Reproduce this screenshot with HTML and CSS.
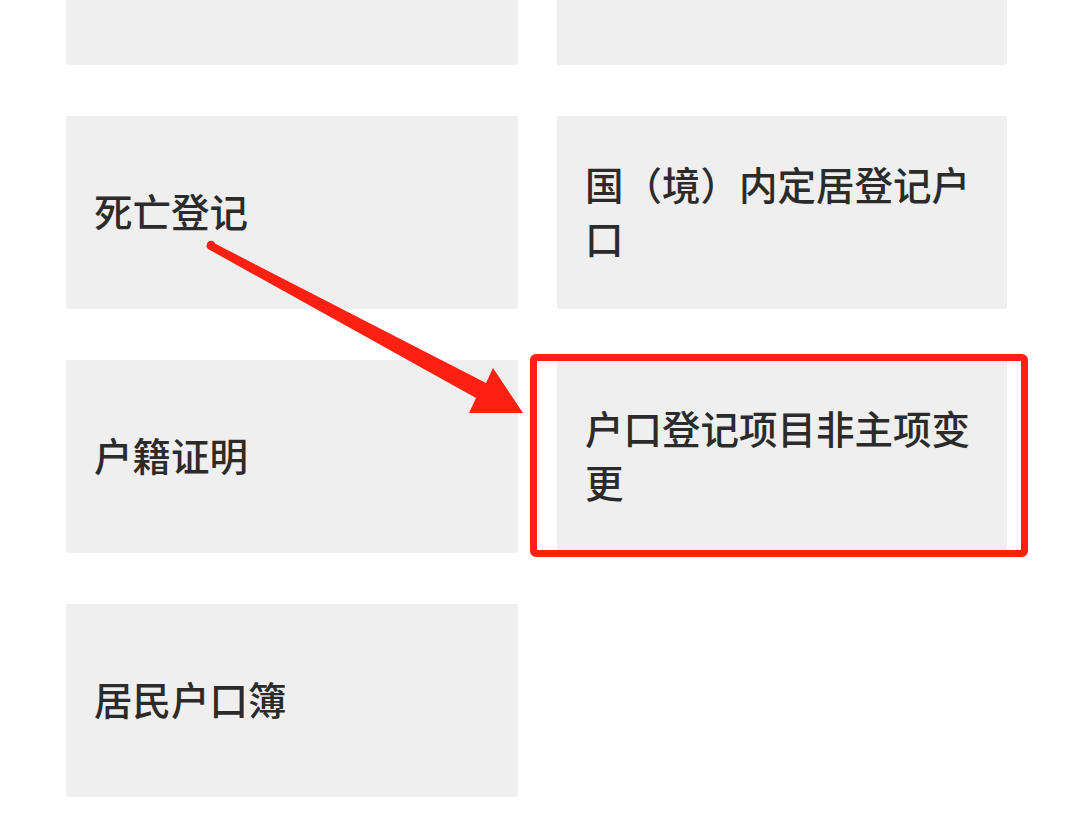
FILE: index.html
```html
<!DOCTYPE html>
<html lang="zh">
<head>
    <meta charset="UTF-8">
    <meta name="viewport" content="width=device-width, initial-scale=1.0">
    <title>户籍业务</title>
    <link rel="stylesheet" href="styles.css">
</head>
<body>
    <div class="page">
        <div class="grid">
            <div class="card"></div>
            <div class="card"></div>
            <div class="card">死亡登记</div>
            <div class="card">国（境）内定居登记户口</div>
            <div class="card">户籍证明</div>
            <div class="card card-marked">
                户口登记项目非主项变更
                <div class="highlight"></div>
            </div>
            <div class="card">居民户口簿</div>
        </div>

        <!-- 标注箭头 -->
        <svg class="arrow" width="1080" height="816" viewBox="0 0 1080 816">
            <path d="M210 241 L486 383 L493 368 L523 413 L469 413 L476 398 L208 249 Q204 245 210 241 Z" fill="#ff2014"/>
            <circle cx="211" cy="245" r="4.2" fill="#ff2014"/>
        </svg>
    </div>
</body>
</html>
```

FILE: styles.css
```css
body {
    margin: 0;
    background-color: #fff;
    font-family: "Noto Sans CJK SC", "Noto Sans", sans-serif;
    color: #2b2b2b;
    overflow: hidden;
}
.page {
    position: relative;
    width: 1080px;
    height: 816px;
    overflow: hidden;
}
.grid {
    display: grid;
    grid-template-columns: 452px 450px;
    grid-auto-rows: 193px;
    column-gap: 39px;
    row-gap: 51px;
    padding-left: 66px;
    margin-top: -128px;
}
.card {
    position: relative;
    display: flex;
    align-items: center;
    background-color: #efefef;
    padding: 0 28px 5px 28px;
    font-size: 38.5px;
    font-weight: 500;
    line-height: 54px;
    border-radius: 2px;
}
.highlight {
    position: absolute;
    top: -6px;
    right: -21px;
    bottom: -4px;
    left: -27px;
    border: 7px solid #ff2014;
    border-radius: 6px;
}
.arrow {
    position: absolute;
    left: 0;
    top: 0;
    pointer-events: none;
}
```
